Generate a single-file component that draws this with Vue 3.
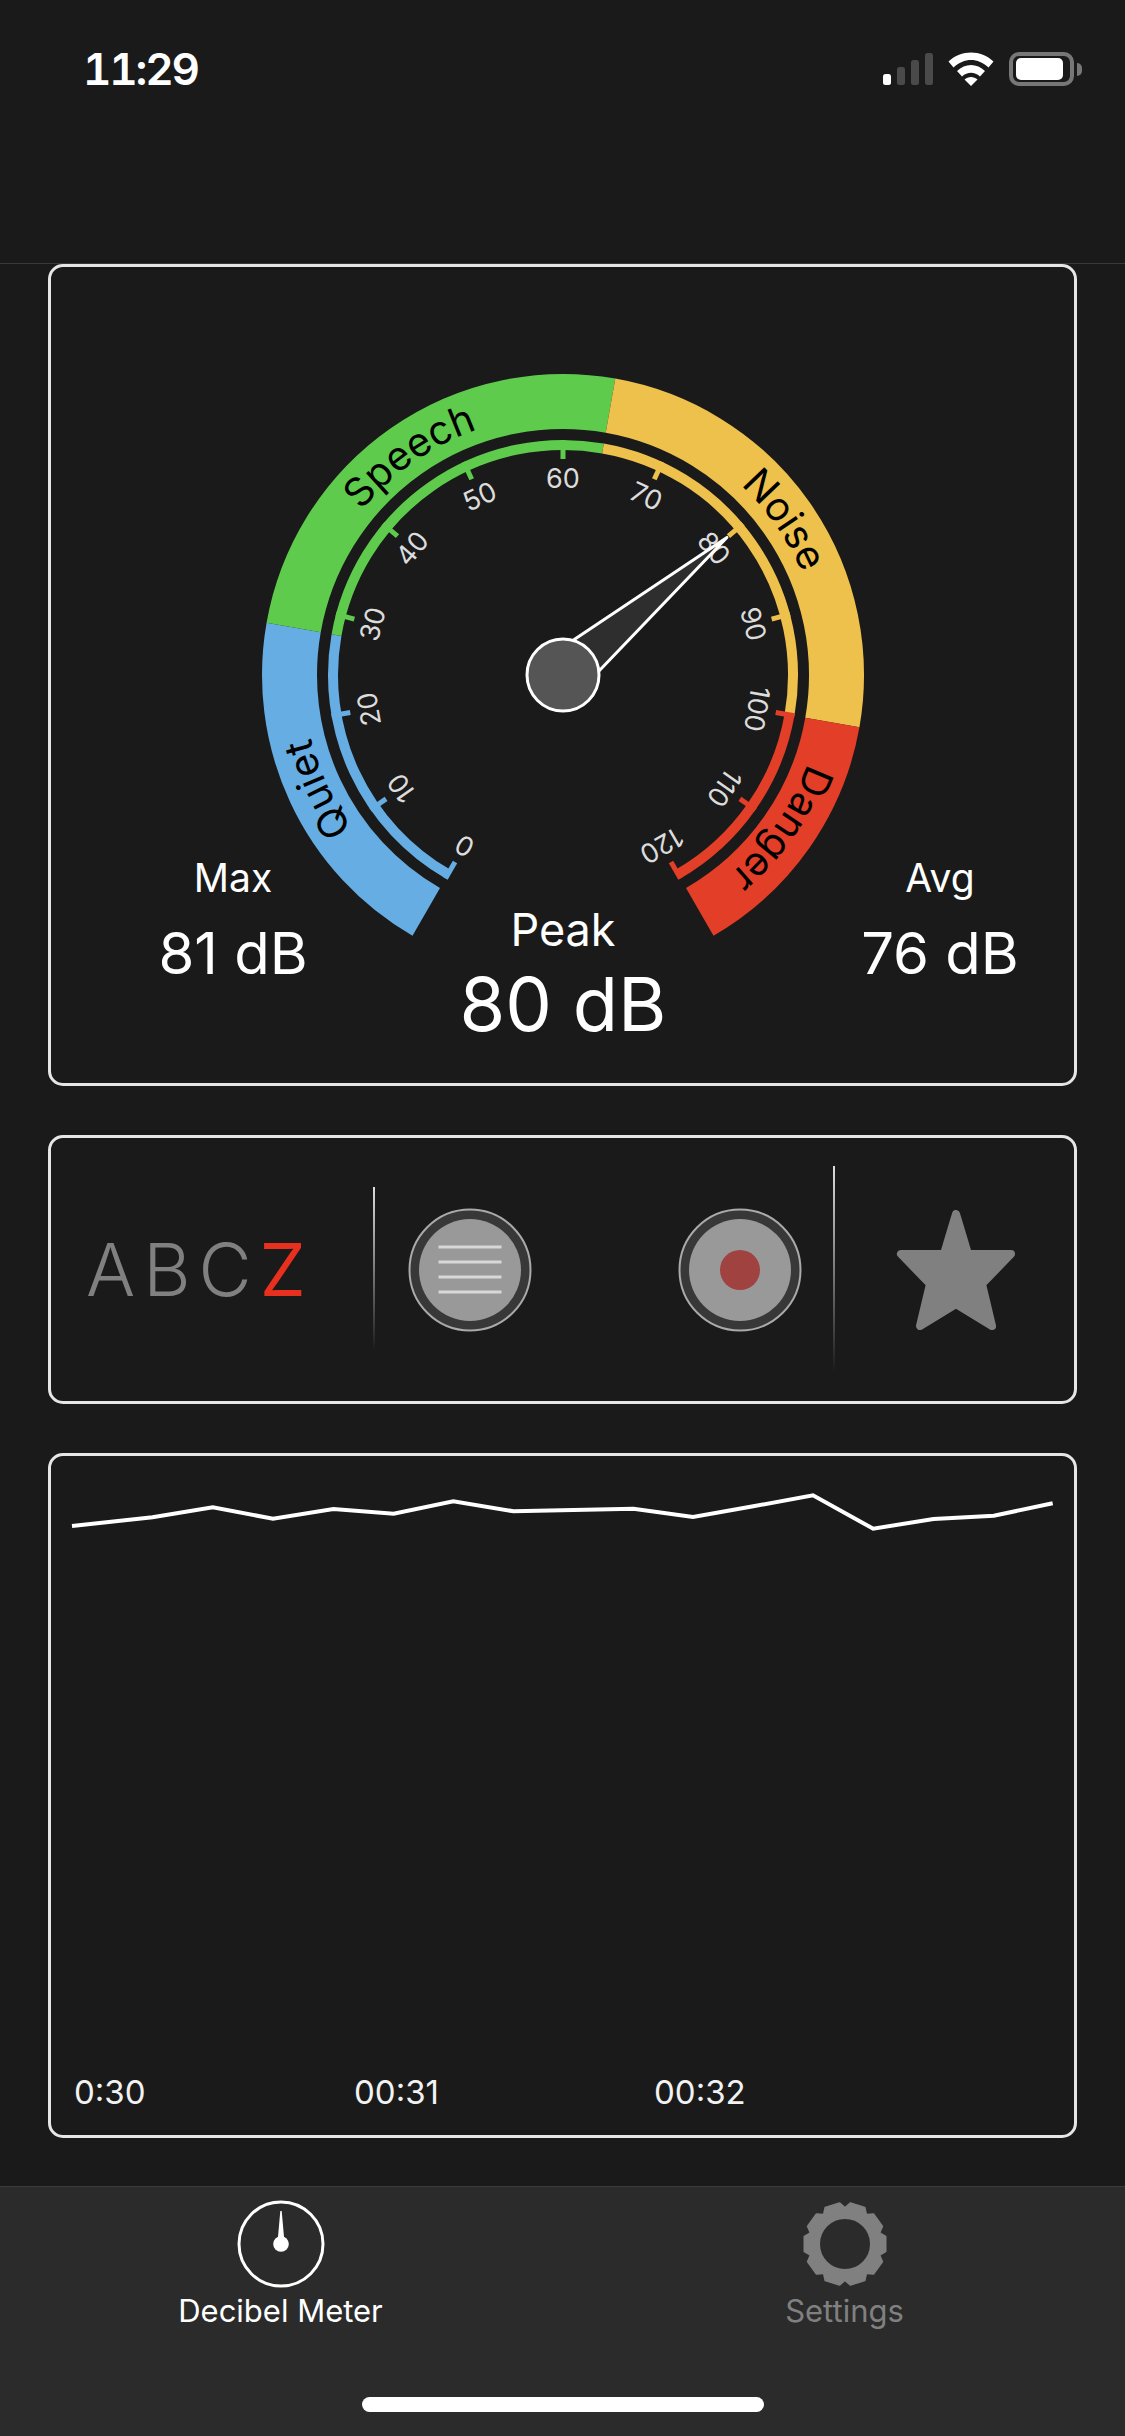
<script setup>
const cx = 320
const cy = 320

const polar = (r, deg) => {
  const a = (deg - 90) * Math.PI / 180
  return [+(cx + r * Math.cos(a)).toFixed(2), +(cy + r * Math.sin(a)).toFixed(2)]
}

const arc = (r, from, to) => {
  const [x1, y1] = polar(r, from)
  const [x2, y2] = polar(r, to)
  return `M${x1} ${y1}A${r} ${r} 0 ${to - from > 180 ? 1 : 0} 1 ${x2} ${y2}`
}

const zones = [
  { name: 'Quiet', color: '#65ade2', from: -150, to: -80 },
  { name: 'Speech', color: '#5fcb4d', from: -80, to: 10 },
  { name: 'Noise', color: '#eec04c', from: 10, to: 100 },
  { name: 'Danger', color: '#e33e28', from: 100, to: 150 }
]

const ticks = Array.from({ length: 13 }, (_, i) => {
  const angle = -150 + i * 25
  const zone = zones.find(z => angle >= z.from && angle < z.to) || zones[3]
  return { value: i * 10, angle, color: zone.color }
})

const graph = '72,1526 152.5,1517.3 212.8,1507.3 273,1518.7 333.4,1509 393.6,1513.7 453.3,1501.3 513.5,1511.3 633.4,1508.7 693,1517 753.3,1506.3 813,1495.3 873.2,1528.7 933.5,1519 993.8,1515.7 1052.7,1503.3'
  .split(' ')
  .map(p => {
    const [x, y] = p.split(',').map(Number)
    return `${(x - 51).toFixed(1)},${(y - 1456).toFixed(1)}`
  })
  .join(' ')

const gearTeeth = Array.from({ length: 10 }, (_, i) => i * 36 + 18)
const menuLines = [-23, -8, 7, 22]
</script>

<template>
  <div class="screen">
    <header class="nav">
      <div class="status">
        <span class="clock">11:29</span>
        <div class="status-icons">
          <div class="signal">
            <i class="on" style="height: 11px"></i>
            <i style="height: 18px"></i>
            <i style="height: 25px"></i>
            <i style="height: 32px"></i>
          </div>
          <svg class="wifi" width="46" height="34" viewBox="0 0 46 34">
            <path d="M0.5 9.5C13 -2.5 33 -2.5 45.5 9.5L40.5 15.5C30 5.5 16 5.5 5.5 15.5Z" fill="#fff" />
            <path d="M9 19C17 11 29 11 37 19L32 24.5C26.5 19.5 19.5 19.5 14 24.5Z" fill="#fff" />
            <path d="M16.5 27.5C20 24 26 24 29.5 27.5L23 34Z" fill="#fff" />
          </svg>
          <div class="battery">
            <div class="battery-body"><div class="battery-fill"></div></div>
            <div class="battery-nub"></div>
          </div>
        </div>
      </div>
    </header>

    <main class="content">
      <section class="card gauge-card">
        <svg class="gauge" width="640" height="640" viewBox="0 0 640 640">
          <defs>
            <path v-for="z in zones" :key="z.name" :id="'zone-' + z.name" :d="arc(260, z.from, z.to)" />
          </defs>

          <path
            v-for="z in zones"
            :key="z.name"
            :d="arc(273.5, z.from, z.to)"
            :stroke="z.color"
            stroke-width="55"
            fill="none"
          />
          <text v-for="z in zones" :key="z.name" class="zone-label">
            <textPath :href="'#zone-' + z.name" startOffset="50%" text-anchor="middle">{{ z.name }}</textPath>
          </text>

          <path
            v-for="z in zones"
            :key="z.name"
            :d="arc(230, z.from, z.to)"
            :stroke="z.color"
            stroke-width="10"
            fill="none"
          />
          <g v-for="t in ticks" :key="t.value" :transform="`rotate(${t.angle} ${cx} ${cy})`">
            <rect :x="cx - 2.5" :y="cy - 235" width="5" height="19" :fill="t.color" />
            <text class="tick-label" :x="cx" :y="cy - 197">{{ t.value }}</text>
          </g>

          <g transform="rotate(50 320 320)">
            <polygon points="300,289.5 320,106 340,289.5" class="needle" />
          </g>
          <circle :cx="cx" :cy="cy" r="36" class="hub" />
        </svg>

        <div class="stats">
          <div class="stat">
            <span class="stat-label">Max</span>
            <span class="stat-value">81 dB</span>
          </div>
          <div class="stat peak">
            <span class="stat-label">Peak</span>
            <span class="stat-value">80 dB</span>
          </div>
          <div class="stat avg">
            <span class="stat-label">Avg</span>
            <span class="stat-value">76 dB</span>
          </div>
        </div>
      </section>

      <section class="card controls-card">
        <div class="letters">ABC<em>Z</em></div>
        <div class="divider short"></div>
        <div class="buttons">
          <svg width="124" height="124" viewBox="0 0 124 124">
            <circle cx="62" cy="62" r="60.5" class="btn-ring" />
            <circle cx="62" cy="62" r="51" fill="#999" />
            <rect v-for="y in menuLines" :key="y" x="30.5" :y="62 + y - 1.5" width="63" height="3" fill="#d8d8d8" />
          </svg>
          <svg width="124" height="124" viewBox="0 0 124 124">
            <circle cx="62" cy="62" r="60.5" class="btn-ring" />
            <circle cx="62" cy="62" r="51" fill="#999" />
            <circle cx="62" cy="62" r="20" fill="#a04240" />
          </svg>
        </div>
        <div class="divider tall"></div>
        <svg class="star" width="120" height="120" viewBox="0 0 120 120">
          <polygon
            points="60,4 72,44 115,44 86,74 96,116 60,94 24,116 34,74 5,44 48,44"
            fill="#808080"
            stroke="#808080"
            stroke-width="8"
            stroke-linejoin="round"
          />
        </svg>
      </section>

      <section class="card graph-card">
        <svg class="graph" width="1021" height="100" viewBox="0 0 1021 100">
          <polyline :points="graph" fill="none" stroke="#fff" stroke-width="4" />
        </svg>
        <div class="times">
          <span>0:30</span>
          <span>00:31</span>
          <span>00:32</span>
        </div>
      </section>
    </main>

    <footer class="tabbar">
      <div class="tabs">
        <div class="tab active">
          <svg width="88" height="88" viewBox="0 0 88 88">
            <circle cx="44" cy="44" r="42" fill="none" stroke="#fff" stroke-width="3" />
            <path d="M43.3 11H44.7L47 37L44 44L41 37Z" fill="#fff" />
            <circle cx="44" cy="44" r="7.8" fill="#fff" />
          </svg>
          <span>Decibel Meter</span>
        </div>
        <div class="tab">
          <svg width="88" height="88" viewBox="0 0 88 88">
            <circle cx="44" cy="44" r="29.75" fill="none" stroke="#808080" stroke-width="9.5" />
            <g v-for="a in gearTeeth" :key="a" :transform="`rotate(${a} 44 44)`">
              <path
                d="M31.5 12L36.5 3.5H51.5L56.5 12Z"
                fill="#808080"
                stroke="#808080"
                stroke-width="2"
                stroke-linejoin="round"
              />
            </g>
          </svg>
          <span>Settings</span>
        </div>
      </div>
      <div class="home-indicator"></div>
    </footer>
  </div>
</template>

<style scoped>
.screen {
  width: 1125px;
  height: 2436px;
  background: #1a1a1a;
  display: flex;
  flex-direction: column;
  font-family: Inter, "Liberation Sans", sans-serif;
  color: #fff;
  overflow: hidden;
}

.nav {
  height: 264px;
  box-sizing: border-box;
  border-bottom: 1px solid #3a3a3a;
  flex-shrink: 0;
}

.status {
  display: flex;
  justify-content: space-between;
  align-items: flex-start;
  padding: 52px 43px 0 83px;
}

.clock {
  font-size: 44px;
  font-weight: 600;
  line-height: 34px;
  letter-spacing: -2.2px;
  font-feature-settings: "tnum";
}

.status-icons {
  display: flex;
  align-items: flex-end;
  height: 34px;
}

.signal {
  display: flex;
  align-items: flex-end;
  gap: 5.5px;
  margin-right: 15px;
  padding-bottom: 1px;
}

.signal i {
  display: block;
  width: 8.5px;
  border-radius: 2.5px;
  background: #4a4a4a;
}

.signal i.on {
  background: #fff;
}

.wifi {
  margin-right: 15px;
}

.battery {
  display: flex;
  align-items: center;
  gap: 3px;
  height: 34px;
}

.battery-body {
  width: 65px;
  height: 34px;
  box-sizing: border-box;
  border: 4px solid #777;
  border-radius: 10px;
  padding: 2px 3px;
}

.battery-fill {
  width: 47px;
  height: 100%;
  background: #fff;
  border-radius: 5px;
}

.battery-nub {
  width: 5px;
  height: 13px;
  background: #777;
  border-radius: 0 6px 6px 0;
}

.content {
  flex: 1;
  padding: 0 48px;
  display: flex;
  flex-direction: column;
  gap: 49px;
}

.card {
  box-sizing: border-box;
  border: 3px solid #e6e6e6;
  border-radius: 15px;
  background: #1a1a1a;
}

.gauge-card {
  height: 822px;
  display: flex;
  flex-direction: column;
  align-items: center;
  padding-top: 88px;
}

.gauge {
  display: block;
  flex-shrink: 0;
}

.zone-label {
  font-size: 40px;
  fill: #000;
}

.tick-label {
  font-size: 27px;
  fill: #dcdcdc;
  text-anchor: middle;
  dominant-baseline: central;
}

.needle {
  fill: #2e2e2e;
  stroke: #fff;
  stroke-width: 3;
  stroke-linejoin: round;
}

.hub {
  fill: #555;
  stroke: #fff;
  stroke-width: 3;
}

.stats {
  align-self: stretch;
  display: flex;
  margin-top: -140px;
  padding-left: 52px;
}

.stat {
  width: 260px;
  display: flex;
  flex-direction: column;
  align-items: center;
  gap: 23px;
}

.stat-label {
  font-size: 39px;
  line-height: 46px;
}

.stat-value {
  font-size: 58px;
  line-height: 58px;
}

.peak {
  margin-top: 50px;
  margin-left: 70px;
  gap: 11px;
}

.avg {
  margin-left: 117px;
}

.peak .stat-label {
  font-size: 45px;
  line-height: 50px;
}

.peak .stat-value {
  font-size: 74px;
  line-height: 76px;
}

.controls-card {
  height: 269px;
  display: flex;
  align-items: center;
}

.letters {
  width: 322px;
  box-sizing: border-box;
  padding-left: 35px;
  font-size: 73px;
  font-weight: 300;
  letter-spacing: 8px;
  color: #808080;
  line-height: 1;
}

.letters em {
  font-style: normal;
  font-weight: 400;
  color: #e8301f;
}

.divider {
  width: 2px;
  flex-shrink: 0;
  background: linear-gradient(#ddd, rgba(255, 255, 255, 0));
}

.divider.short {
  height: 164px;
  margin-top: -1px;
}

.divider.tall {
  height: 206px;
  margin-top: -1px;
}

.buttons {
  width: 458px;
  box-sizing: border-box;
  padding: 0 31px 0 33px;
  display: flex;
  justify-content: space-between;
}

.buttons svg {
  display: block;
}

.btn-ring {
  fill: #383838;
  stroke: #aaa;
  stroke-width: 2;
}

.star {
  display: block;
  margin-left: 61px;
}

.graph-card {
  height: 685px;
  display: flex;
  flex-direction: column;
  justify-content: space-between;
}

.graph {
  display: block;
}

.times {
  display: flex;
  padding: 0 0 22px 23px;
  font-size: 33px;
  line-height: 42px;
  color: #f2f2f2;
}

.times span:nth-child(1) {
  width: 280px;
}

.times span:nth-child(2) {
  width: 300px;
}

.tabbar {
  height: 250px;
  box-sizing: border-box;
  border-top: 1px solid #3c3c3c;
  background: #2b2b2b;
  flex-shrink: 0;
  display: flex;
  flex-direction: column;
  align-items: center;
}

.tabs {
  align-self: stretch;
  display: flex;
  justify-content: space-between;
  padding: 13px 138px 0 138px;
  height: 210px;
  box-sizing: border-box;
}

.tab {
  width: 285px;
  display: flex;
  flex-direction: column;
  align-items: center;
  gap: 5px;
  font-size: 31px;
  line-height: 36px;
  color: #808080;
}

.tab svg {
  display: block;
}

.tab.active {
  color: #fff;
}

.home-indicator {
  width: 402px;
  height: 15px;
  border-radius: 8px;
  background: #fff;
}
</style>
